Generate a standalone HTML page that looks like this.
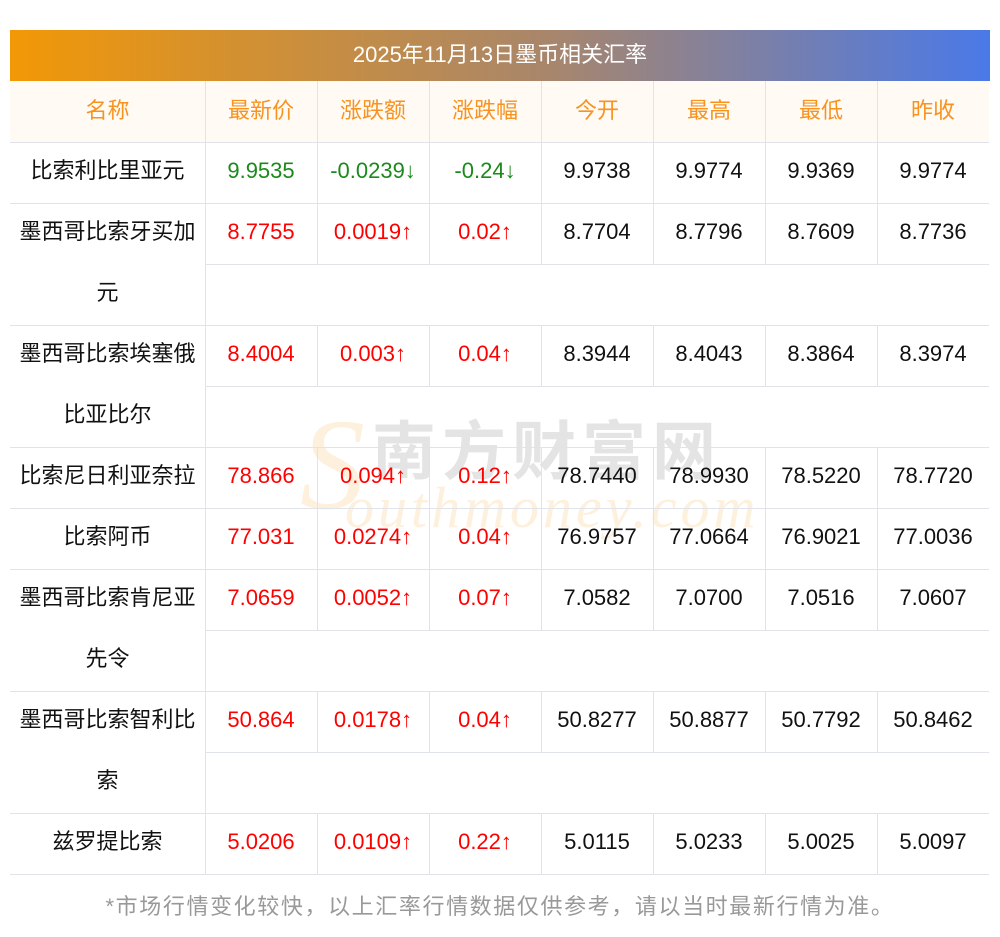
<!DOCTYPE html><html><head><meta charset="utf-8"><style>
body{margin:0;width:1000px;height:937px;background:#fff;position:relative;font-family:"Liberation Sans","Noto Sans CJK SC",sans-serif;overflow:hidden}
.a{position:absolute}
.t{position:absolute;text-align:center;font-size:22px;line-height:61px;height:61px;white-space:nowrap}
.h{background:#e0e3ea}
</style></head><body>
<div class="a" style="left:10px;top:30px;width:980px;height:51px;background:linear-gradient(90deg,#f29806,#a8866c 55%,#4a79e8);color:#fff;font-size:22px;line-height:49px;text-align:center">2025年11月13日墨币相关汇率</div>
<div class="a" style="left:10px;top:81px;width:979px;height:61px;background:#fffaf4"></div>
<div id="w" class="a" style="left:0;top:0;width:1000px;height:937px">
<div class="a" style="left:300px;top:400px;font-size:130px;color:#fdf0dc;font-family:'Liberation Serif',serif;font-style:italic;line-height:130px">S</div>
<div class="a" style="left:372px;top:412px;font-size:64px;color:#e4e4e4;letter-spacing:6px;font-family:'Noto Sans CJK SC',sans-serif;font-weight:bold;line-height:70px">南方财富网</div>
<div class="a" style="left:345px;top:478px;font-size:58px;color:#fdf0dc;font-family:'Liberation Serif',serif;font-style:italic;letter-spacing:4px;line-height:60px">outhmoney.com</div>
</div>
<div id="g"></div>
<script>
var cols=[10,205,317,429,541,653,765,877,989];
var rows=[
["比索利比里亚元",1,"9.9535","-0.0239↓","-0.24↓","9.9738","9.9774","9.9369","9.9774",0],
["墨西哥比索牙买加|元",2,"8.7755","0.0019↑","0.02↑","8.7704","8.7796","8.7609","8.7736",1],
["墨西哥比索埃塞俄|比亚比尔",2,"8.4004","0.003↑","0.04↑","8.3944","8.4043","8.3864","8.3974",1],
["比索尼日利亚奈拉",1,"78.866","0.094↑","0.12↑","78.7440","78.9930","78.5220","78.7720",1],
["比索阿币",1,"77.031","0.0274↑","0.04↑","76.9757","77.0664","76.9021","77.0036",1],
["墨西哥比索肯尼亚|先令",2,"7.0659","0.0052↑","0.07↑","7.0582","7.0700","7.0516","7.0607",1],
["墨西哥比索智利比|索",2,"50.864","0.0178↑","0.04↑","50.8277","50.8877","50.7792","50.8462",1],
["兹罗提比索",1,"5.0206","0.0109↑","0.22↑","5.0115","5.0233","5.0025","5.0097",1]];
var h="";
function L(x,y,w,hh){h+='<div class="a h" style="left:'+x+'px;top:'+y+'px;width:'+w+'px;height:'+hh+'px"></div>';}
function T(x,y,w,s,c){h+='<div class="t" style="left:'+x+'px;top:'+y+'px;width:'+w+'px;color:'+c+'">'+s+'</div>';}
var hd=["名称","最新价","涨跌额","涨跌幅","今开","最高","最低","昨收"];
for(var i=0;i<8;i++){T(cols[i],80,cols[i+1]-cols[i],hd[i],"#f7931e");if(i>0)L(cols[i],81,1,61);}
L(10,142,979,1);
var y=142;
rows.forEach(function(r){
 var n=r[0].split("|");
 for(var k=0;k<n.length;k++)T(10,y+61*k-2,195,n[k],"#111");
 for(var i=1;i<8;i++){var c=i<=3?(r[9]?"#f00":"#1a8a1a"):"#111";T(cols[i],y-2,cols[i+1]-cols[i],r[i+1],c);L(cols[i],y,1,61);}
 if(r[1]==2){L(205,y+61,784,1);L(205,y+61,1,61);}
 y+=61*r[1];L(10,y,979,1);
});
h+='<div class="a" style="left:0;top:887px;width:1000px;text-align:center;font-size:22px;letter-spacing:1.6px;color:#999;line-height:40px">*市场行情变化较快，以上汇率行情数据仅供参考，请以当时最新行情为准。</div>';
document.getElementById("g").innerHTML=h;
</script>
</body></html>
